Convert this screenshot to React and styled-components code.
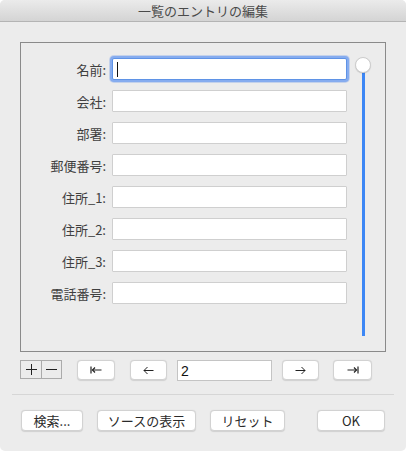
import React from "react";
import styled, { createGlobalStyle } from "styled-components";

const Global = createGlobalStyle`
  html, body { margin: 0; padding: 0; background: #ffffff; }
  body { font-family: "Noto Sans CJK JP", "Noto Sans", "Liberation Sans", sans-serif; }
  * { box-sizing: border-box; }
`;

const Window = styled.div`
  width: 406px;
  height: 451px;
  background: #ececec;
  border-radius: 5px;
  overflow: hidden;
  display: flex;
  flex-direction: column;
`;

const TitleBar = styled.div`
  height: 22px;
  flex: none;
  background: linear-gradient(#ebebeb, #d4d4d4);
  border-bottom: 1px solid #b4b4b4;
  display: flex;
  align-items: center;
  justify-content: center;
  font-size: 13px;
  color: #4a4a4a;
  line-height: 1;
  padding-bottom: 1px;
`;

const Content = styled.div`
  padding: 20px 20px 0 20px;
  display: flex;
  flex-direction: column;
`;

const Panel = styled.div`
  width: 366px;
  height: 310px;
  border: 1px solid #8a8a8a;
  display: flex;
  padding: 15px 0 15px 0;
`;

const FormGrid = styled.div`
  display: grid;
  grid-template-columns: 85px 235px;
  grid-auto-rows: 22px;
  column-gap: 6px;
  row-gap: 10px;
  align-content: start;
`;

const Label = styled.label`
  font-size: 13px;
  color: #3f3f3f;
  text-align: right;
  align-self: center;
  line-height: 1;
  padding-top: 1px;
`;

const Field = styled.div`
  position: relative;
  background: #ffffff;
  border: 1px solid ${(p) => (p.$focused ? "#5f93e6" : "#cfcfcf")};
  box-shadow: ${(p) =>
    p.$focused ? "0 0 0 2px #86acef, 0 0 0 3px rgba(120,160,235,0.35)" : "none"};
  border-radius: ${(p) => (p.$focused ? "2px" : "1px")};
`;

const Caret = styled.span`
  position: absolute;
  left: 4px;
  top: 3px;
  width: 1px;
  height: 15px;
  background: #111;
`;

const SliderCol = styled.div`
  width: 16px;
  margin-left: 8px;
  display: flex;
  flex-direction: column;
  align-items: center;
`;

const Knob = styled.div`
  width: 16px;
  height: 16px;
  margin-top: -1px;
  border-radius: 50%;
  background: #ffffff;
  border: 1px solid #cdcdcd;
  box-shadow: 0 0.5px 1px rgba(0, 0, 0, 0.15);
  flex: none;
  position: relative;
  z-index: 1;
`;

const Track = styled.div`
  width: 3px;
  flex: 1;
  margin-top: -1px;
  background: #3d87f5;
`;

const Toolbar = styled.div`
  margin-top: 8px;
  height: 20px;
  display: flex;
  align-items: flex-start;
`;

const Segmented = styled.div`
  display: flex;
  height: 19px;
  border: 1px solid #ababab;
`;

const SegButton = styled.div`
  width: 20px;
  height: 100%;
  display: flex;
  align-items: center;
  justify-content: center;
  & + & { border-left: 1px solid #ababab; }
`;

const PushButton = styled.div`
  width: ${(p) => p.$w}px;
  height: ${(p) => p.$h || 20}px;
  margin-left: ${(p) => p.$ml || 0}px;
  background: #ffffff;
  border: 1px solid #d2d2d2;
  border-radius: 4px;
  box-shadow: 0 0.5px 1px rgba(0, 0, 0, 0.12);
  display: flex;
  align-items: center;
  justify-content: center;
  font-size: 13px;
  color: #2a2a2a;
  line-height: 1;
  flex: none;
`;

const RecordField = styled.div`
  width: 95px;
  height: 21px;
  margin-left: ${(p) => p.$ml}px;
  background: #ffffff;
  border: 1px solid #c4c4c4;
  font-family: "Liberation Sans", Arial, sans-serif;
  font-size: 14px;
  color: #111;
  padding-left: 3px;
  display: flex;
  align-items: center;
  flex: none;
`;

const Separator = styled.div`
  margin: 14px -8px 0 -8px;
  height: 1px;
  background: #d6d6d6;
`;

const Actions = styled.div`
  margin-top: 15px;
  padding-left: 1px;
  display: flex;
`;

const Plus = () => (
  <svg width="11" height="11" viewBox="0 0 11 11">
    <path d="M5.5 0V11M0 5.5H11" stroke="#222" strokeWidth="1" />
  </svg>
);
const Minus = () => (
  <svg width="11" height="11" viewBox="0 0 11 11">
    <path d="M0 5.5H11" stroke="#222" strokeWidth="1" />
  </svg>
);
const FirstIcon = () => (
  <svg width="12" height="8" viewBox="0 0 12 8">
    <path d="M1 0.5V7.5" stroke="#222" strokeWidth="1.2" />
    <path d="M2.5 4H11.5" stroke="#222" strokeWidth="1.2" />
    <path d="M5 1.5L2.5 4L5 6.5" stroke="#222" strokeWidth="1.2" fill="none" />
  </svg>
);
const LastIcon = () => (
  <svg width="12" height="8" viewBox="0 0 12 8">
    <path d="M11 0.5V7.5" stroke="#222" strokeWidth="1.2" />
    <path d="M0.5 4H9.5" stroke="#222" strokeWidth="1.2" />
    <path d="M7 1.5L9.5 4L7 6.5" stroke="#222" strokeWidth="1.2" fill="none" />
  </svg>
);
const LeftIcon = () => (
  <svg width="11" height="9" viewBox="0 0 11 9">
    <path d="M1 4.5H10.5" stroke="#222" strokeWidth="1" />
    <path d="M4.5 1L1 4.5L4.5 8" stroke="#222" strokeWidth="1" fill="none" />
  </svg>
);
const RightIcon = () => (
  <svg width="11" height="9" viewBox="0 0 11 9">
    <path d="M0.5 4.5H10" stroke="#222" strokeWidth="1" />
    <path d="M6.5 1L10 4.5L6.5 8" stroke="#222" strokeWidth="1" fill="none" />
  </svg>
);

const fields = ["名前:", "会社:", "部署:", "郵便番号:", "住所_1:", "住所_2:", "住所_3:", "電話番号:"];

export default function App() {
  return (
    <>
      <Global />
      <Window>
        <TitleBar>一覧のエントリの編集</TitleBar>
        <Content>
          <Panel>
            <FormGrid>
              {fields.map((f, i) => (
                <React.Fragment key={f}>
                  <Label>{f}</Label>
                  <Field $focused={i === 0}>{i === 0 && <Caret />}</Field>
                </React.Fragment>
              ))}
            </FormGrid>
            <SliderCol>
              <Knob />
              <Track />
            </SliderCol>
          </Panel>
          <Toolbar>
            <Segmented>
              <SegButton><Plus /></SegButton>
              <SegButton><Minus /></SegButton>
            </Segmented>
            <PushButton $w={38} $ml={15}><FirstIcon /></PushButton>
            <PushButton $w={37} $ml={15}><LeftIcon /></PushButton>
            <RecordField $ml={10}>2</RecordField>
            <PushButton $w={37} $ml={10}><RightIcon /></PushButton>
            <PushButton $w={39} $ml={14}><LastIcon /></PushButton>
          </Toolbar>
          <Separator />
          <Actions>
            <PushButton $w={62} $h={21}>検索...</PushButton>
            <PushButton $w={99} $h={21} $ml={14}>ソースの表示</PushButton>
            <PushButton $w={75} $h={21} $ml={14}>リセット</PushButton>
            <PushButton $w={68} $h={21} $ml={32}>OK</PushButton>
          </Actions>
        </Content>
      </Window>
    </>
  );
}
